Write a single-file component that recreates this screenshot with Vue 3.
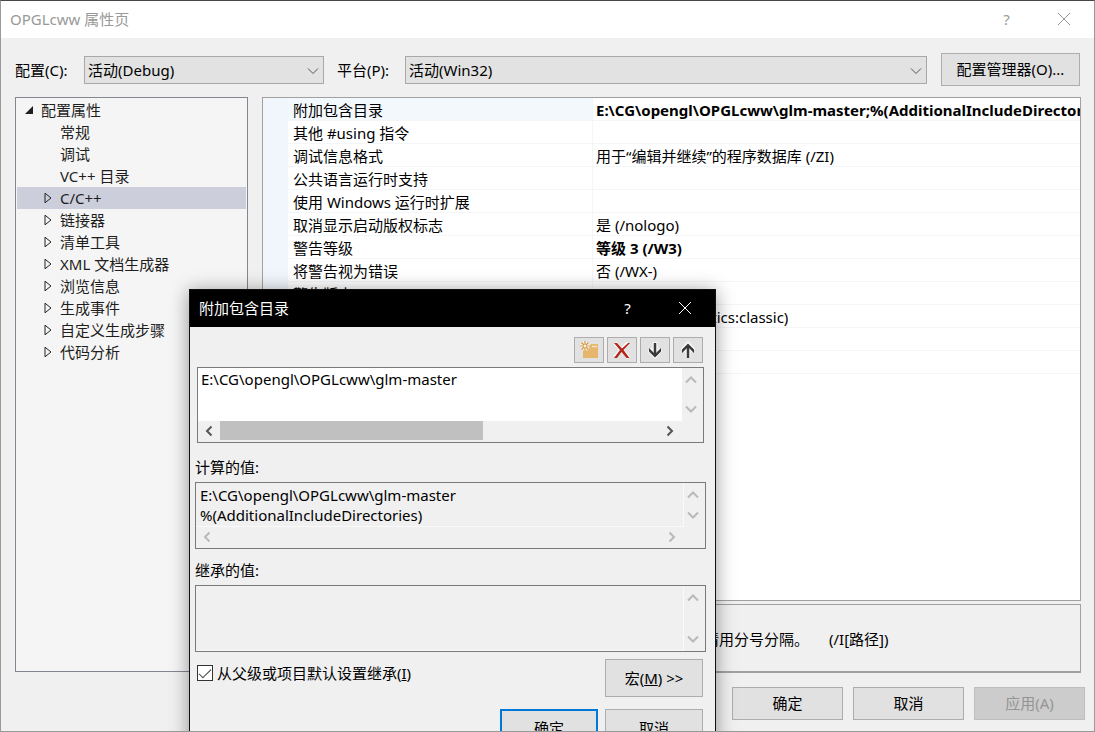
<script setup>
import { ref } from 'vue'

const config = ref('活动(Debug)')
const platform = ref('活动(Win32)')
const inherit = ref(true)
const selected = ref('C/C++')

const tree = [
  { label: '常规' },
  { label: '调试' },
  { label: 'VC++ 目录' },
  { label: 'C/C++', branch: true },
  { label: '链接器', branch: true },
  { label: '清单工具', branch: true },
  { label: 'XML 文档生成器', branch: true },
  { label: '浏览信息', branch: true },
  { label: '生成事件', branch: true },
  { label: '自定义生成步骤', branch: true },
  { label: '代码分析', branch: true },
]

const rows = [
  { name: '附加包含目录', value: 'E:\\CG\\opengl\\OPGLcww\\glm-master;%(AdditionalIncludeDirectories)', bold: true, active: true },
  { name: '其他 #using 指令', value: '' },
  { name: '调试信息格式', value: '用于“编辑并继续”的程序数据库 (/ZI)' },
  { name: '公共语言运行时支持', value: '' },
  { name: '使用 Windows 运行时扩展', value: '' },
  { name: '取消显示启动版权标志', value: '是 (/nologo)' },
  { name: '警告等级', value: '等级 3 (/W3)', bold: true },
  { name: '将警告视为错误', value: '否 (/WX-)' },
  { name: '警告版本', value: '' },
  { name: '诊断格式', value: '经典型 (/diagnostics:classic)' },
  { name: 'SDL 检查', value: '' },
  { name: '多处理器编译', value: '' },
]

const entries = ref('E:\\CG\\opengl\\OPGLcww\\glm-master')
const evaluated = 'E:\\CG\\opengl\\OPGLcww\\glm-master\n%(AdditionalIncludeDirectories)'
</script>

<template>
  <main class="window">
    <header class="titlebar">
      <h1>OPGLcww 属性页</h1>
      <button class="caption" aria-label="帮助">?</button>
      <button class="caption" aria-label="关闭">
        <svg width="14" height="14" viewBox="0 0 14 14"><path d="M1 1l12 12M13 1L1 13" /></svg>
      </button>
    </header>

    <div class="settings">
      <label for="config">配置(C):</label>
      <span class="dropdown config">
        <select id="config" v-model="config"><option>活动(Debug)</option></select>
        <svg width="12" height="8" viewBox="0 0 12 8"><path d="M1 1.5l5 5 5-5" /></svg>
      </span>
      <label for="platform" class="platform-label">平台(P):</label>
      <span class="dropdown platform">
        <select id="platform" v-model="platform"><option>活动(Win32)</option></select>
        <svg width="12" height="8" viewBox="0 0 12 8"><path d="M1 1.5l5 5 5-5" /></svg>
      </span>
      <button class="btn manager">配置管理器(O)...</button>
    </div>

    <div class="content">
      <ul class="tree" role="tree">
        <li class="root" role="treeitem">
          <svg width="10" height="10" viewBox="0 0 10 10"><path d="M9 1v8H1z" fill="#1e1e1e" /></svg>
          配置属性
        </li>
        <li
          v-for="item in tree"
          :key="item.label"
          role="treeitem"
          :class="{ selected: item.label === selected }"
          @click="selected = item.label"
        >
          <span class="arrow">
            <svg v-if="item.branch" width="8" height="12" viewBox="0 0 8 12">
              <path d="M1 1.2v9.6L7 6z" fill="none" stroke="#222" />
            </svg>
          </span>
          {{ item.label }}
        </li>
      </ul>

      <div class="details">
        <div class="grid">
          <table>
            <colgroup><col class="gutter" /><col class="name" /><col /></colgroup>
            <tbody>
              <tr v-for="row in rows" :key="row.name" :class="{ active: row.active }">
                <td></td>
                <th scope="row">{{ row.name }}</th>
                <td :class="{ bold: row.bold }">{{ row.value }}</td>
              </tr>
            </tbody>
          </table>
        </div>
        <section class="description">
          <strong>附加包含目录</strong>
          <p>指定一个或多个要添加到包含路径中的目录；当目录不止一个时，请用分号分隔。<span>(/I[路径])</span></p>
        </section>
      </div>
    </div>

    <footer class="actions">
      <button class="btn">确定</button>
      <button class="btn">取消</button>
      <button class="btn" disabled>应用(A)</button>
    </footer>

    <section class="dialog" role="dialog" aria-labelledby="dialog-title">
      <header class="dialog-title">
        <h2 id="dialog-title">附加包含目录</h2>
        <button class="caption" aria-label="帮助">?</button>
        <button class="caption" aria-label="关闭">
          <svg width="14" height="14" viewBox="0 0 14 14"><path d="M1 1l12 12M13 1L1 13" /></svg>
        </button>
      </header>

      <div class="dialog-body">
        <div class="tools">
          <button aria-label="新行">
            <svg width="22" height="20" viewBox="0 0 22 20">
              <path d="M5 9h5l3-5h7v14H5z" fill="#e5b66c" />
              <path d="M14 6.500h5" stroke="#f7e3c0" stroke-width="1.500" />
              <path d="M7 1v10M2 6h10M3.500 2.500l7 7M10.500 2.500l-7 7" stroke="#fff" stroke-width="2.500" />
              <path d="M7 1v10M2 6h10M3.500 2.500l7 7M10.500 2.500l-7 7" stroke="#c98f35" stroke-width="1.200" />
              <circle cx="7" cy="6" r="1.500" fill="#fff3d8" />
            </svg>
          </button>
          <button aria-label="删除">
            <svg width="22" height="20" viewBox="0 0 22 20">
              <path d="M4 3l14 15M17 3L4 17" stroke="#fff" stroke-width="4" />
              <path d="M3 3h3l5 5.500L17 3h2l-6.500 7 6 8h-3l-5-6L6 18H3l6-8z" fill="#b3261a" />
            </svg>
          </button>
          <button aria-label="下移">
            <svg width="22" height="20" viewBox="0 0 22 20">
              <path d="M11 2v13M5.500 9.500l5.500 6 5.500-6" stroke="#f8f8f8" stroke-width="5" fill="none" />
              <path d="M11 3v12" stroke="#3a3a3a" stroke-width="2.500" />
              <path d="M5 8v3.500l6 6 6-6V8l-6 6z" fill="#3a3a3a" />
            </svg>
          </button>
          <button aria-label="上移">
            <svg width="22" height="20" viewBox="0 0 22 20">
              <path d="M11 18V5M5.500 10.500l5.500-6 5.500 6" stroke="#f8f8f8" stroke-width="5" fill="none" />
              <path d="M11 18V6" stroke="#3a3a3a" stroke-width="2.500" />
              <path d="M5 13V9.500l6-6 6 6V13l-6-6z" fill="#3a3a3a" />
            </svg>
          </button>
        </div>

        <div class="box editor">
          <div class="row">
            <textarea v-model="entries" wrap="off" aria-label="附加包含目录"></textarea>
            <div class="vbar">
              <svg width="12" height="8" viewBox="0 0 12 8"><path d="M1 6.500l5-5 5 5" /></svg>
              <svg width="12" height="8" viewBox="0 0 12 8"><path d="M1 1.500l5 5 5-5" /></svg>
            </div>
          </div>
          <div class="hbar">
            <svg width="8" height="12" viewBox="0 0 8 12"><path d="M6.500 1.500L2 6l4.500 4.500" /></svg>
            <div class="track"><div class="thumb"></div></div>
            <svg width="8" height="12" viewBox="0 0 8 12"><path d="M1.500 1.500L6 6l-4.500 4.500" /></svg>
          </div>
        </div>

        <label class="caption-label" for="evaluated">计算的值:</label>
        <div class="box readonly">
          <div class="row">
            <textarea id="evaluated" :value="evaluated" wrap="off" readonly></textarea>
            <div class="vbar">
              <svg width="12" height="8" viewBox="0 0 12 8"><path d="M1 6.500l5-5 5 5" /></svg>
              <svg width="12" height="8" viewBox="0 0 12 8"><path d="M1 1.500l5 5 5-5" /></svg>
            </div>
          </div>
          <div class="hbar">
            <svg width="8" height="12" viewBox="0 0 8 12"><path d="M6.500 1.500L2 6l4.500 4.500" /></svg>
            <div class="track"></div>
            <svg width="8" height="12" viewBox="0 0 8 12"><path d="M1.500 1.500L6 6l-4.500 4.500" /></svg>
          </div>
        </div>

        <label class="caption-label" for="inherited">继承的值:</label>
        <div class="box readonly">
          <div class="row">
            <textarea id="inherited" readonly></textarea>
            <div class="vbar">
              <svg width="12" height="8" viewBox="0 0 12 8"><path d="M1 6.500l5-5 5 5" /></svg>
              <svg width="12" height="8" viewBox="0 0 12 8"><path d="M1 1.500l5 5 5-5" /></svg>
            </div>
          </div>
        </div>

        <div class="options">
          <div class="check">
            <input id="inherit" v-model="inherit" type="checkbox" />
            <label for="inherit">从父级或项目默认设置继承(<u>I</u>)</label>
          </div>
          <button class="btn">宏(<u>M</u>) &gt;&gt;</button>
        </div>
        <div class="dialog-actions">
          <button class="btn default">确定</button>
          <button class="btn">取消</button>
        </div>
      </div>
    </section>
  </main>
</template>

<style>
body {
  margin: 0;
  background: #f0f0f0;
}
</style>

<style scoped>
* {
  box-sizing: border-box;
}

.window {
  position: relative;
  display: flex;
  flex-direction: column;
  height: 100vh;
  overflow: hidden;
  border: 1px solid #999;
  border-top-color: #484548;
  background: #f0f0f0;
  color: #000;
  font: 15px/22px "Noto Sans", "Noto Sans CJK SC", sans-serif;
}

button,
select,
textarea {
  font: inherit;
  color: inherit;
}

svg {
  display: block;
  flex: none;
}

h1,
h2 {
  flex: 1;
  margin: 0;
  padding-bottom: 2px;
  font-size: 15px;
  font-weight: 400;
}

.titlebar {
  display: flex;
  align-items: center;
  flex: none;
  height: 37px;
  padding: 0 2px 0 9px;
  background: #fff;
  color: #999;
}

.caption {
  display: flex;
  align-items: center;
  justify-content: center;
  width: 57px;
  height: 36px;
  padding: 0 0 2px;
  border: 0;
  background: none;
}

.caption path {
  fill: none;
  stroke: currentColor;
}

.settings {
  display: flex;
  align-items: center;
  flex: none;
  padding: 15px 14px 11px;
}

.settings label {
  flex: none;
  width: 69px;
}

.settings .platform-label {
  width: 68px;
  margin-left: 13px;
}

.dropdown {
  position: relative;
  display: flex;
  height: 28px;
}

.dropdown.config {
  flex: 0 0 240px;
}

.dropdown.platform {
  flex: 1;
}

.dropdown select {
  width: 100%;
  padding: 0 24px 0 3px;
  border: 1px solid #a8a8a8;
  border-radius: 0;
  background: #e2e2e2;
  appearance: none;
}

.dropdown svg {
  position: absolute;
  top: 11px;
  right: 5px;
  pointer-events: none;
}

.dropdown path {
  fill: none;
  stroke: #555;
}

.btn {
  height: 33px;
  padding: 0 0 1px;
  border: 1px solid #adadad;
  background: #e1e1e1;
  text-align: center;
}

.btn:disabled {
  border-color: #bfbfbf;
  background: #ccc;
  color: #949494;
}

.manager {
  flex: none;
  width: 139px;
  margin-left: 14px;
}

.content {
  display: flex;
  flex: 1;
  gap: 14px;
  min-height: 0;
  padding: 0 13px 0 14px;
}

.tree {
  flex: 0 0 233px;
  margin: 0 0 1px;
  padding: 1px;
  border: 1px solid #828790;
  background: #f5f5f5;
  color: #1e1e1e;
  list-style: none;
}

.tree li {
  display: flex;
  align-items: center;
  height: 22px;
  padding-left: 27px;
}

.tree .root {
  gap: 7px;
  padding-left: 7px;
}

.tree .selected {
  background: #cccedb;
}

.arrow {
  flex: 0 0 16px;
}

.details {
  display: flex;
  flex: 1;
  flex-direction: column;
  gap: 3px;
  min-width: 0;
}

.grid {
  flex: 1;
  min-height: 0;
  overflow: hidden;
  border: 1px solid #a0a0a0;
  background: #fff;
}

table {
  width: 100%;
  border-spacing: 0;
  table-layout: fixed;
}

col.gutter {
  width: 25px;
}

col.name {
  width: 305px;
}

td,
th {
  height: 23px;
  padding: 2px 0 0 3px;
  overflow: hidden;
  border-bottom: 1px solid #f3f6f9;
  font-weight: 400;
  line-height: 20px;
  text-align: left;
  vertical-align: top;
  white-space: nowrap;
}

td:first-child {
  border-color: #f1f6fc;
  background: #f1f6fc;
}

th {
  padding-left: 5px;
  border-right: 1px solid #f3f6f9;
}

.active th {
  background: #f3f8fd;
}

td.bold {
  font-weight: 700;
}

.description {
  flex: none;
  height: 69px;
  padding: 1px 6px;
  overflow: hidden;
  border: 1px solid #a0a0a0;
  border-bottom-width: 2px;
  white-space: nowrap;
}

.description p {
  margin: 0;
}

.description span {
  margin-left: 20px;
}

.actions {
  display: flex;
  flex: none;
  gap: 10px;
  justify-content: flex-end;
  padding: 14px 9px 11px;
}

.actions .btn {
  width: 111px;
  padding-bottom: 2px;
}

.dialog {
  position: absolute;
  top: 288px;
  left: 188px;
  width: 527px;
  border: 1px solid #111;
  background: #f0f0f0;
  box-shadow: 0 2px 18px rgba(0, 0, 0, 0.4);
}

.dialog-title {
  display: flex;
  align-items: center;
  height: 37px;
  padding: 0 2px 0 9px;
  background: #000;
  color: #fff;
}

.dialog-body {
  padding: 10px 9px 14px 5px;
}

.tools {
  display: flex;
  gap: 3px;
  justify-content: flex-end;
  padding-right: 3px;
}

.tools button {
  display: flex;
  align-items: center;
  justify-content: center;
  width: 30px;
  height: 26px;
  padding: 0;
  border: 1px solid #adadad;
  background: #e1e1e1;
}

.box {
  display: flex;
  flex-direction: column;
  height: 67px;
  border: 1px solid #7a7a7a;
}

.editor {
  height: 76px;
  margin: 4px 2px 0;
  background: #fff;
}

.row {
  display: flex;
  flex: 1;
  min-height: 0;
}

textarea {
  flex: 1;
  min-width: 0;
  padding: 1px 3px;
  overflow: hidden;
  border: 0;
  outline: 0;
  background: none;
  line-height: 20px;
  resize: none;
}

.readonly textarea {
  padding: 2px 4px 0;
  border: solid #fafafa;
  border-width: 0 1px 1px 0;
}

.vbar {
  display: flex;
  flex-direction: column;
  flex: none;
  justify-content: space-between;
  width: 21px;
  padding: 8px 0 8px 3px;
  background: #f0f0f0;
}

.box path {
  fill: none;
  stroke: #b9b9b9;
  stroke-width: 2;
}

.hbar {
  display: flex;
  align-items: center;
  flex: none;
  height: 21px;
  padding: 0 29px 2px 7px;
  background: #f0f0f0;
}

.editor .hbar path {
  stroke: #555;
}

.track {
  flex: 1;
  height: 19px;
  margin: 0 7px;
}

.thumb {
  width: 60%;
  height: 100%;
  background: #c0c0c0;
}

.caption-label {
  display: block;
  padding: 13px 0 4px;
}

.readonly + .caption-label {
  padding-top: 10px;
}

.options {
  display: flex;
  justify-content: space-between;
  margin-top: 7px;
  padding-right: 3px;
}

.check {
  display: flex;
  align-items: center;
  height: 28px;
  padding-left: 2px;
}

.check input {
  width: 16px;
  height: 16px;
  margin: 0 4px 0 0;
  border: 1px solid #333;
  background: #fff;
  appearance: none;
}

.check input:checked::before {
  display: block;
  width: 11px;
  height: 5px;
  margin: 3px 0 0 1px;
  border: solid #333;
  border-width: 0 0 1px 1px;
  content: "";
  transform: rotate(-45deg);
}

.dialog-body .btn {
  width: 98px;
  height: 38px;
}

.dialog-actions {
  display: flex;
  gap: 7px;
  justify-content: flex-end;
  margin-top: 12px;
  padding-right: 3px;
}

.dialog-body .default {
  border: 2px solid #0078d7;
}
</style>
